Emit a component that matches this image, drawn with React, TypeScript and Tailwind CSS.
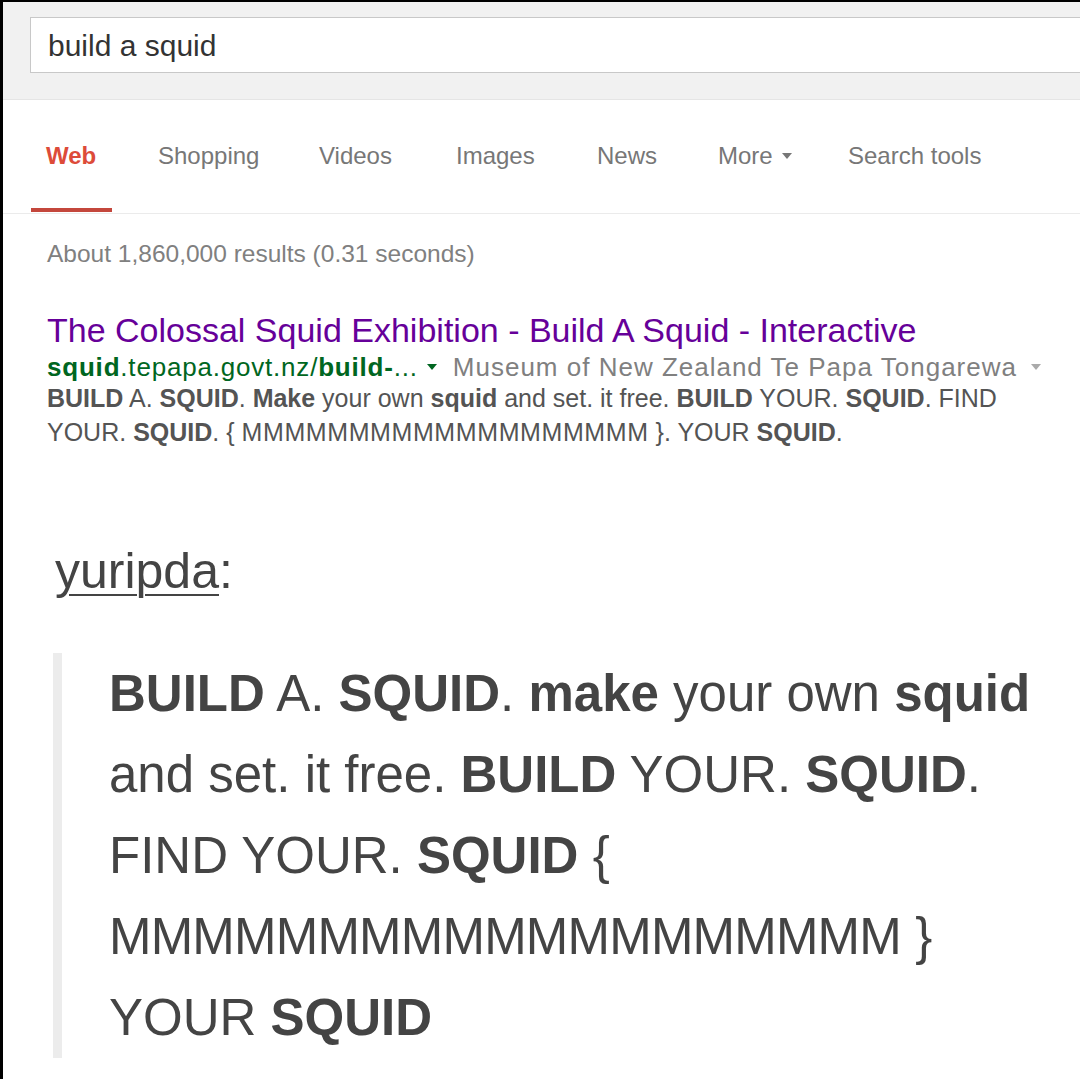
const tabs = [
  { label: "Shopping", w: "w-[161px]" },
  { label: "Videos", w: "w-[137px]" },
  { label: "Images", w: "w-[141px]" },
  { label: "News", w: "w-[121px]" },
]

function Caret({ className }: { className: string }) {
  return (
    <svg width="10" height="6" viewBox="0 0 10 6" className={className}>
      <path d="M0 0h10L5 6z" fill="currentColor" />
    </svg>
  )
}

export default function App() {
  return (
    <div
      className="w-[1080px] h-[1079px] overflow-hidden bg-white border-l-[3px] border-t-2 border-black text-[#222]"
      style={{ fontFamily: '"Liberation Sans", Arial, sans-serif' }}
    >
      {/* search header */}
      <div className="h-[98px] bg-[#f1f1f1] pt-[15px] pl-[27px] border-b border-[#e5e5e5]">
        <div className="w-[1100px] h-[56px] bg-white border border-[#c8c8c8] flex items-center pl-[17px] text-[30px] text-[#333]">
          build a squid
        </div>
      </div>

      {/* tabs */}
      <div className="flex h-[114px] pl-[28px] border-b border-[#ebebeb] text-[24px] leading-[28px] text-[#777]">
        <div className="w-[81px] h-[112px] pl-[15px] pt-[42px] border-b-4 border-[#c4473c] text-[#dd4b39] font-bold">
          Web
        </div>
        <div className="w-[46px]" />
        {tabs.map((t) => (
          <div key={t.label} className={`${t.w} pt-[42px]`}>
            {t.label}
          </div>
        ))}
        <div className="w-[130px] pt-[42px] flex items-start gap-[9px]">
          <span>More</span>
          <Caret className="mt-[11px] text-[#777]" />
        </div>
        <div className="pt-[42px]">Search tools</div>
      </div>

      {/* results */}
      <div className="pl-[44px]">
        <div className="mt-[28px] text-[24.5px] leading-[24px] text-[#808080]">
          About 1,860,000 results (0.31 seconds)
        </div>
        <div className="mt-[47px] text-[34px] leading-[34px] text-[#660099]">
          The Colossal Squid Exhibition - Build A Squid - Interactive
        </div>
        <div className="mt-[4px] flex items-center text-[26px] leading-[32px] whitespace-nowrap">
          <span className="text-[#006621] tracking-[0.8px]">
            <b>squid</b>.tepapa.govt.nz/<b>build-</b>...
          </span>
          <Caret className="ml-[9px] text-[#006621]" />
          <span className="ml-[16px] text-[#808080] tracking-[1px]">Museum of New Zealand Te Papa Tongarewa</span>
          <Caret className="ml-[14px] text-[#aaa]" />
        </div>
        <div className="-mt-[2px] text-[25px] leading-[34px] text-[#545454] whitespace-nowrap">
          <b>BUILD</b> A. <b>SQUID</b>. <b>Make</b> your own <b>squid</b> and set. it free. <b>BUILD</b> YOUR.{" "}
          <b>SQUID</b>. FIND
          <br />
          YOUR. <b>SQUID</b>. {"{"} <span className="tracking-[0.6px]">MMMMMMMMMMMMMMMMMMM</span> {"}"}. YOUR{" "}
          <b>SQUID</b>.
        </div>
      </div>

      {/* tumblr post */}
      <div className="pl-[52px] mt-[92px] text-[50px] leading-[60px] text-[#444]">
        <span className="underline decoration-2 underline-offset-[6px]">yuripda</span>:
      </div>

      <div className="ml-[50px] mt-[52px] w-[1000px] border-l-[9px] border-[#ececec] pl-[47px] pr-[10px] text-[51px] leading-[81px] text-[#444]">
        <b>BUILD</b> A. <b>SQUID</b>. <b>make</b> your own <b>squid</b> and set. it free. <b>BUILD</b> YOUR.{" "}
        <b>SQUID</b>. FIND YOUR. <b>SQUID</b> {"{"}{" "}
        <span className="tracking-[-0.8px]">MMMMMMMMMMMMMMMMMMM</span> {"}"} YOUR <b>SQUID</b>
      </div>
    </div>
  )
}
